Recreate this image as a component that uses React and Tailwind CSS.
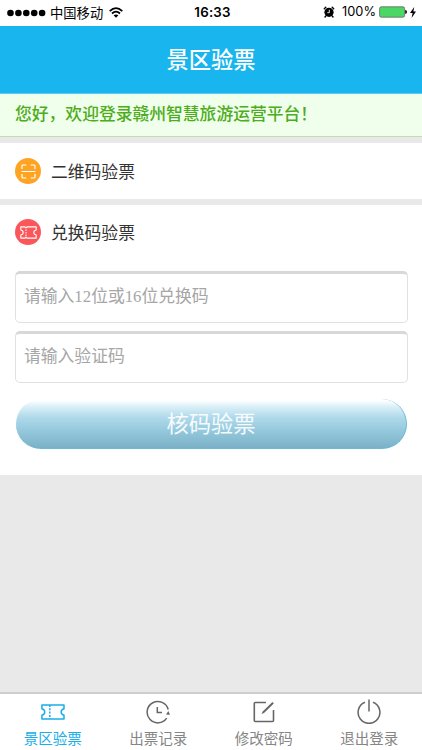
import React from 'react';

function TicketIcon({ className, strokeWidth = 1.5 }) {
  return (
    <svg className={className} viewBox="0 0 24 16" fill="none" stroke="currentColor" strokeWidth={strokeWidth} strokeLinejoin="round">
      <path d="M.9 1H23V4.7C20.8 5.3 20.2 6.5 20.2 8s.6 2.7 2.8 3.3V15H.9V11.3C3.1 10.7 3.7 9.5 3.7 8S3.1 5.3.9 4.7Z" />
      <path d="M8.8 1V15" strokeDasharray="2 1.3" />
    </svg>
  );
}

function CouponIcon() {
  return (
    <svg className="h-[13px] w-[17px]" viewBox="0 0 17 13" fill="none" stroke="currentColor" strokeWidth="1.1" strokeLinejoin="round">
      <path d="M.8.9H5L6 2 7 .9H16.2V4Q13.8 4.5 13.8 6.5T16.2 9v3.1H7L6 11 5 12.1H.8V9Q3.2 8.5 3.2 6.5T.8 4Z" />
      <path d="M6 3.6V10" strokeDasharray="1.4 1.1" />
    </svg>
  );
}

function StatusBar() {
  return (
    <div className="flex h-[26px] shrink-0 items-center bg-white pb-px text-black">
      <div className="flex flex-1 items-center pl-[7px]">
        <svg className="h-2 w-[39px]" viewBox="0 0 39 8">
          <circle cx="3.5" cy="4" r="3.3" />
          <circle cx="11.4" cy="4" r="3.3" />
          <circle cx="19.3" cy="4" r="3.3" />
          <circle cx="27.2" cy="4" r="3.3" />
          <circle cx="35.1" cy="4" r="3.3" />
        </svg>
        <span className="ml-1 text-[13.3px] leading-[20px]">中国移动</span>
        <svg className="ml-1.5 h-[11px] w-[14px]" viewBox="0 0 14 11" fill="none" stroke="currentColor" strokeWidth="1.8">
          <path d="M.7 4.1Q7-1.8 13.3 4.1M3 6.5Q7 2.8 11 6.5" />
          <path d="M7 10.7 4.6 8.3Q7 6.5 9.4 8.3Z" fill="currentColor" stroke="none" />
        </svg>
      </div>
      <span className="pl-[2px] font-[Inter] text-[13.3px] font-semibold leading-none tracking-[0.2px]">16:33</span>
      <div className="flex flex-1 items-center justify-end pr-[6px]">
        <svg className="mr-[7px] h-3 w-3" viewBox="0 0 12 12">
          <circle cx="6" cy="6.3" r="4.6" />
          <path d="M1.3 2.7 2.8 1.3M9.2 1.3 10.7 2.7M2.8 10 2 11M9.2 10l.8 1" stroke="currentColor" strokeWidth="1.4" strokeLinecap="round" />
          <path d="M6.3 3.8V6.7H4.3" fill="none" stroke="white" strokeWidth=".9" />
        </svg>
        <span className="font-[Inter] text-[12.8px] leading-none">100%</span>
        <svg className="ml-[3px] h-3 w-[28px]" viewBox="0 0 28 12">
          <rect x=".6" y=".8" width="25" height="10.4" rx="1.6" fill="#4bd763" stroke="#666" strokeWidth=".8" />
          <path d="M26.2 4.1Q28 4.3 28 6t-1.8 1.9Z" />
        </svg>
        <svg className="ml-[3px] h-[11px] w-[6px]" viewBox="0 0 6 11">
          <path d="M4.2 0 0 6.1H2.6L1.6 11 6 4.5H3.4Z" />
        </svg>
      </div>
    </div>
  );
}

function ScanIcon() {
  return (
    <svg className="h-[15px] w-[15px]" viewBox="0 0 15 15" fill="none" stroke="currentColor" strokeWidth="1.2">
      <path d="M1 5V2Q1 1 2 1H5.3M9.7 1H13q1 0 1 1V5M14 10v3q0 1-1 1H9.7M5.3 14H2q-1 0-1-1V10M.5 7.5H14.5" />
    </svg>
  );
}

function Tab({ icon, label, active }) {
  return (
    <div className={`flex flex-1 flex-col items-center ${active ? 'text-[#18aee9]' : 'text-[#666]'}`}>
      <div className="mt-[5px] flex h-[25px] items-center">{icon}</div>
      <span className={`mt-1 text-[14.5px] leading-[20px] ${active ? '' : 'text-[#858585]'}`}>{label}</span>
    </div>
  );
}

const inputStyle = "block h-[52px] w-full rounded-[5px] border border-t-[3px] border-[#e1e1e1] border-t-[#d8d8d8] bg-white pl-2 pr-[9px] pb-[3px] font-['Liberation_Serif','Noto_Sans_CJK_SC',serif] text-[16.8px] text-[#666] outline-none placeholder:text-[#a6a6a6]";

export default function App() {
  return (
    <div className="flex h-[750px] w-[422px] flex-col overflow-hidden bg-[#e9e9e9] font-['Noto_Sans_CJK_SC',sans-serif]">
      <StatusBar />
      <header className="flex h-[68px] shrink-0 items-center justify-center border-b border-[#5accf5] bg-[#19b5ef] pb-[3px] text-[22.3px] font-medium leading-none text-white">景区验票</header>
      <div className="flex h-[43px] shrink-0 items-center border-b border-[#bee0b0] bg-[#f0ffeb] pb-[3px] pl-[15px] text-[16.8px] font-medium leading-none text-[#4dac20]">您好，欢迎登录赣州智慧旅游运营平台！</div>
      <div className="mt-1.5 flex h-14 shrink-0 items-center bg-white pl-[15px] text-[#333]">
        <span className="flex h-[26px] w-[26px] items-center justify-center rounded-full bg-[#fea422] text-white"><ScanIcon /></span>
        <span className="ml-2.5 pb-px text-[16.8px] leading-6">二维码验票</span>
      </div>
      <main className="mt-1.5 h-[270px] shrink-0 bg-white pl-[15px] pr-[14px]">
        <div className="flex h-[54px] items-center text-[#333]">
          <span className="flex h-[26px] w-[26px] items-center justify-center rounded-full bg-[#fb565a] text-white"><CouponIcon /></span>
          <span className="ml-2.5 text-[16.8px] leading-6">兑换码验票</span>
        </div>
        <form className="pt-3" onSubmit={(e) => e.preventDefault()}>
          <input className={inputStyle} placeholder="请输入12位或16位兑换码" />
          <input className={`${inputStyle} mt-2`} placeholder="请输入验证码" />
          <button type="submit" className="mx-px mt-4 flex h-[50px] w-[391px] items-center justify-center rounded-[25px] border-r border-b border-[#6db9d6] bg-[linear-gradient(to_bottom,#ffffff_0%,#fafdff_5%,#d9eff7_16%,#afd9ea_38%,#94c8dc_65%,#7bb1c7_100%)] pb-[2px] text-[22.3px] font-normal leading-none text-white/90">核码验票</button>
        </form>
      </main>
      <nav className="mt-auto flex h-[58px] shrink-0 border-t-2 border-[#cecece] bg-white">
        <Tab active label="景区验票" icon={<TicketIcon className="h-4 w-6" />} />
        <Tab
          label="出票记录"
          icon={
            <svg className="h-6 w-6" viewBox="0 0 24 24" fill="none" stroke="currentColor" strokeWidth="1.5">
              <path d="M20.7 18.2A10.7 10.7 0 1 1 22.2 9.5M11.3 7v5.6H16" />
              <path d="m20 14.5 2.4-3.6 1.6 3.9Z" fill="currentColor" stroke="none" />
            </svg>
          }
        />
        <Tab
          label="修改密码"
          icon={
            <svg className="h-[22px] w-[22px]" viewBox="0 0 22 22" fill="none" stroke="currentColor" strokeWidth="1.6">
              <path d="M13 1.5H2.3Q1.3 1.5 1.3 2.5V19.5Q1.3 20.5 2.3 20.5H19.5Q20.5 20.5 20.5 19.5V9" />
              <path d="m8.5 13 1.2-2.4L19.4 1.1 20.8 2.5 11 12Z" fill="currentColor" stroke="none" />
            </svg>
          }
        />
        <Tab
          label="退出登录"
          icon={
            <svg className="h-[25px] w-6" viewBox="0 0 24 25" fill="none" stroke="currentColor" strokeWidth="1.5">
              <path d="M12 .5V12.5M8 3.3A10.9 10.9 0 1 0 16 3.3" />
            </svg>
          }
        />
      </nav>
    </div>
  );
}
